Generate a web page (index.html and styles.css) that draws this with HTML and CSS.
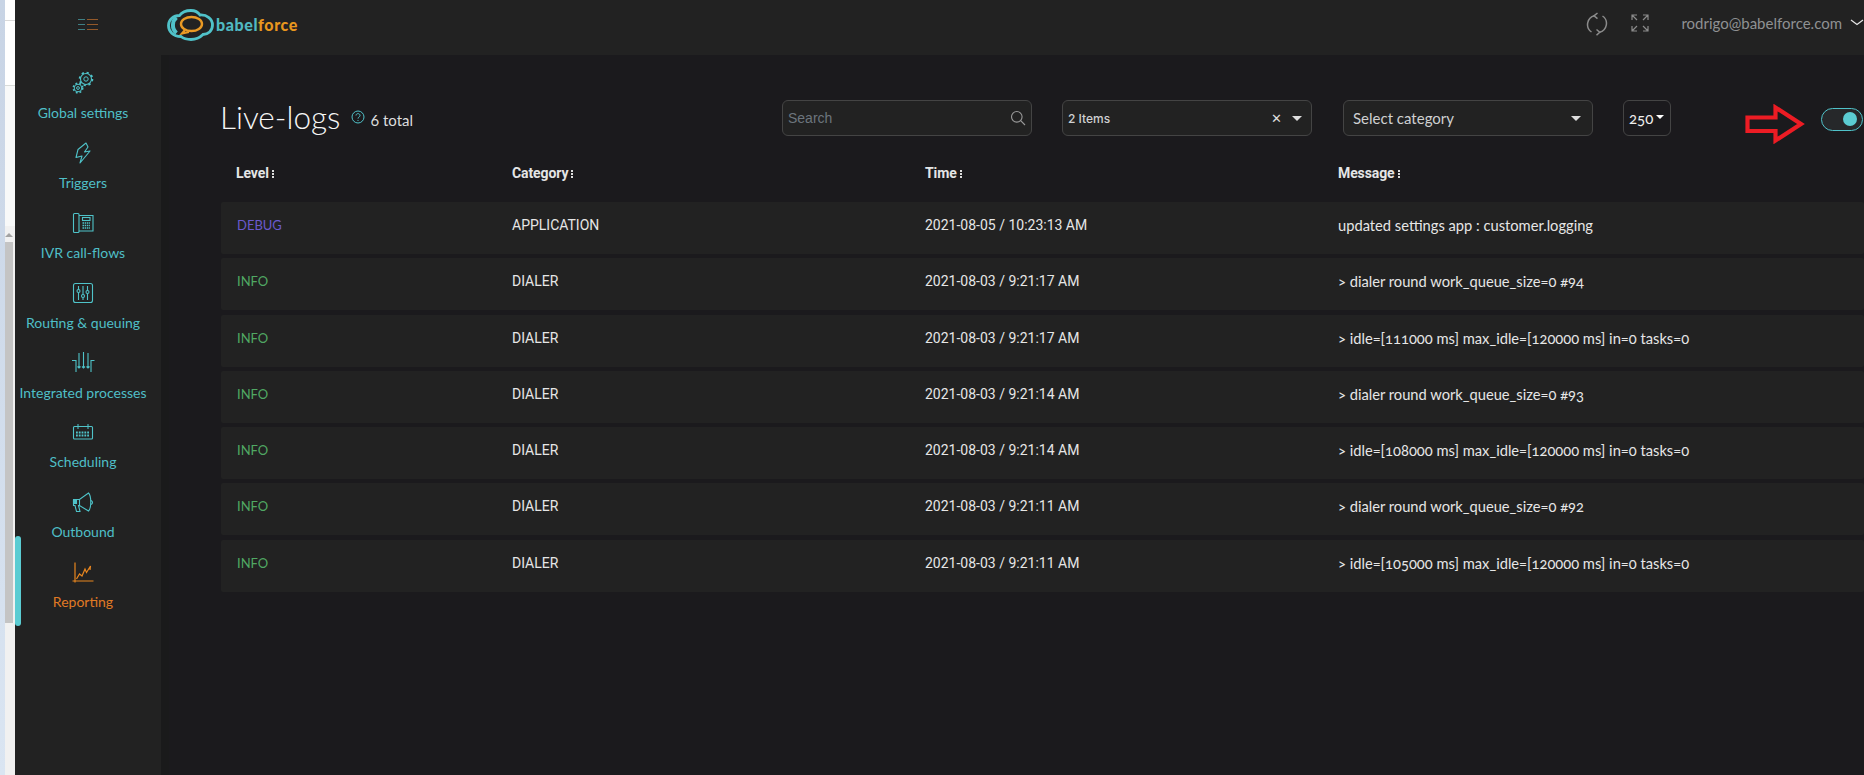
FILE: index.html
```html
<!DOCTYPE html>
<html lang="en">
<head>
<meta charset="utf-8">
<title>Live-logs</title>
<link rel="stylesheet" href="styles.css">
</head>
<body>
<div class="edge"></div>
<div class="gutter">
  <div class="g-a"></div>
  <div class="g-b"></div>
  <div class="g-c"></div>
  <div class="g-track">
    <div class="g-arrow"></div>
    <div class="g-thumb"></div>
  </div>
</div>
<div class="app">
  <header class="topbar">
    <div class="brand-slot">
      <svg class="menu-icon" width="22" height="14" viewBox="0 0 22 14"><g stroke-width="1"><path d="M1 1.5h7M1 6.5h7M1 11.5h7" stroke="#3f7f84"/><path d="M10 1.5h11M10 6.5h11M10 11.5h11" stroke="#94592a"/></g></svg>
    </div>
    <div class="logo">
      <svg width="47" height="32" viewBox="0 0 47 32" fill="none"><path d="M14 27.5C6 27.5 1.5 22.5 1.5 16.5 1.5 10.5 6.5 6.5 12.5 6.5 15 3 20 1.5 24 1.5c4 0 7 1.500 9 4.500C40 5.500 45.500 10 45.500 16c0 6-4.500 9.500-9.500 9.500-3 3-7.500 5-12 5-4 0-7.500-1-10-3z" stroke="#50c2c9" stroke-width="2.800"/><path d="M9.500 8.500C5 12 4.500 20 9.500 24" stroke="#50c2c9" stroke-width="4"/><ellipse cx="24.500" cy="15" rx="10.500" ry="7" stroke="#ea9a24" stroke-width="2.400"/><path d="M18 21l-3 3.500 7-1.500" stroke="#ea9a24" stroke-width="2.200"/></svg>
      <span class="logo-text"><span class="logo-a">babel</span><span class="logo-b">force</span></span>
    </div>
    <div class="top-actions">
      <svg class="sync" width="22" height="24" viewBox="0 0 22 24" fill="none" stroke="#8b8b8b" stroke-width="1.500"><path d="M8.500 3.800A9 9 0 0 0 5.500 20M13.500 20.200A9 9 0 0 0 16.500 4"/><path d="M11.500 1L8 3.800l3.500 2.800M10.500 17.500l3.200 2.700-3.200 3"/></svg>
      <svg class="expand" width="18" height="18" viewBox="0 0 18 18" fill="none" stroke="#8b8b8b" stroke-width="1.200"><path d="M1 6V1h5M1 1l5 5M12 1h5v5M17 1l-5 5M1 12v5h5M1 17l5-5M17 12v5h-5M17 17l-5-5"/></svg>
      <span class="user">rodrigo@babelforce.com</span>
      <svg class="chev" width="14" height="8" viewBox="0 0 14 8" fill="none" stroke="#e6e6e6" stroke-width="1.200"><path d="M1 1l6 4.500L13 1"/></svg>
    </div>
  </header>
  <div class="body">
    <nav class="side">
      <div class="active-bar"></div>
      <a class="nav-item">
        <svg class="nav-icon" viewBox="0 0 30 30" fill="none"><circle cx="18" cy="11" r="5.500" stroke-width="1.100"/><circle cx="18" cy="11" r="6.400" stroke-width="1.800" stroke-dasharray="2.200 2.800"/><circle cx="18" cy="11" r="2.200" stroke-width="1"/><circle cx="10" cy="20" r="3.800" stroke-width="1"/><circle cx="10" cy="20" r="4.700" stroke-width="1.600" stroke-dasharray="1.800 2"/><circle cx="10" cy="20" r="1.400" stroke-width="1"/></svg>
        <span>Global settings</span>
      </a>
      <a class="nav-item">
        <svg class="nav-icon" viewBox="0 0 30 30" fill="none" stroke-width="1.100"><path d="M18 5l-8 6.500-2 8 6-1.500-2 7 10-12-5.500 1 3.500-5z" stroke-linejoin="round"/></svg>
        <span>Triggers</span>
      </a>
      <a class="nav-item">
        <svg class="nav-icon" viewBox="0 0 30 30" fill="none" stroke-width="1.100"><rect x="5.500" y="5.500" width="5.500" height="19" rx="1"/><path d="M11 7.500h14v15.500H11"/><rect x="14.500" y="9.500" width="7.500" height="3"/><path d="M14.500 15h7.500M14.500 17.500h7.500M14.500 20h7.500" stroke-width="1.600" stroke-dasharray="1.500 .7"/></svg>
        <span>IVR call-flows</span>
      </a>
      <a class="nav-item">
        <svg class="nav-icon" viewBox="0 0 30 30" fill="none" stroke-width="1.100"><rect x="5.500" y="5.500" width="19" height="19" rx="2"/><path d="M10.500 8v14M15 8v14M19.500 8v14"/><circle cx="10.500" cy="13" r="1.500" fill="#222"/><circle cx="15" cy="18" r="1.500" fill="#222"/><circle cx="19.500" cy="14" r="1.500" fill="#222"/></svg>
        <span>Routing &amp; queuing</span>
      </a>
      <a class="nav-item nav-tight">
        <svg class="nav-icon" viewBox="0 0 30 30" fill="none" stroke-width="1.100"><path d="M11 5v15M15.500 4v16M20 5v15M9.500 18.500L11 20l1.500-1.500M14 18.500l1.500 1.500 1.500-1.500M18.500 18.500L20 20l1.500-1.500M4 12.500h4V24M26.500 12.500h-3.500V24"/></svg>
        <span>Integrated processes</span>
      </a>
      <a class="nav-item">
        <svg class="nav-icon" viewBox="0 0 30 30" fill="none" stroke-width="1.100"><rect x="5.500" y="9.500" width="19" height="12.500" rx="1"/><path d="M10 7v5M20 7v5" stroke-width="1"/><path d="M8 15.500h14M8 18.500h14" stroke-width="1.800" stroke-dasharray="1.800 1"/></svg>
        <span>Scheduling</span>
      </a>
      <a class="nav-item">
        <svg class="nav-icon" viewBox="0 0 30 30" fill="none" stroke-width="1.100"><path d="M5.500 12.500h6l9-6.500c3 3 3 15 0 18l-9-5.500h-1l1.500 6H8.500l-1.500-6h-1.500z"/><path d="M11.500 12.500v6M23 13.500c2 1 2 3 0 4"/><rect x="5.500" y="13.500" width="3" height="3" fill="#50c2c9"/></svg>
        <span>Outbound</span>
      </a>
      <a class="nav-item nav-on">
        <svg class="nav-icon" viewBox="0 0 30 30" fill="none" stroke-width="1.200"><path d="M7 5.500v20M4.500 24h21"/><path d="M8.500 22l3-5 2.500 2 3-7 1.500 3.500 4-6.500-.5 4"/></svg>
        <span>Reporting</span>
      </a>
    </nav>
    <main class="main">
      <div class="toolbar">
        <div class="heading">
          <h1 class="title">Live-logs</h1>
          <svg class="help" width="14" height="14" viewBox="0 0 14 14" fill="none" stroke="#50c2c9"><circle cx="7" cy="7" r="6"/><path d="M5 5.500C5 3 9 3 9 5.500 9 7 7 7 7 8.600M7 10v1"/></svg>
          <span class="total">6 total</span>
        </div>
        <div class="control search">
          <span class="placeholder">Search</span>
          <svg width="16" height="16" viewBox="0 0 16 16" fill="none" stroke="#9a9a9a" stroke-width="1.100"><circle cx="6.800" cy="6.800" r="5.300"/><path d="M10.700 10.700L15 15"/></svg>
        </div>
        <div class="control select-items">
          <span class="items-label">2 Items</span>
          <span class="clear">✕</span>
          <span class="caret"></span>
        </div>
        <div class="control select-cat">
          <span class="cat-label">Select category</span>
          <span class="caret"></span>
        </div>
        <div class="control page-size">
          <span class="size-label">250</span>
          <span class="caret small"></span>
        </div>
        <svg class="pointer" width="60" height="40" viewBox="0 0 60 40" fill="none"><path d="M2.500 13.500h28V3.500l25.500 16.500-25.500 16.500V27H2.500z" stroke="#ed1c24" stroke-width="4.200"/></svg>
        <div class="toggle"><span class="knob"></span></div>
      </div>
      <div class="log-grid log-head">
        <div class="th">Level<span class="sort"></span></div>
        <div class="th">Category<span class="sort"></span></div>
        <div class="th">Time<span class="sort"></span></div>
        <div class="th">Message<span class="sort"></span></div>
      </div>
      <div class="rows">
        <div class="log-grid log-row"><div class="lvl debug">DEBUG</div><div class="mono">APPLICATION</div><div class="mono">2021-08-05 / 10:23:13 AM</div><div class="msg">updated settings app : customer.logging</div></div>
        <div class="log-grid log-row"><div class="lvl info">INFO</div><div class="mono">DIALER</div><div class="mono">2021-08-03 / 9:21:17 AM</div><div class="msg">&gt; dialer round work_queue_size=0 #94</div></div>
        <div class="log-grid log-row"><div class="lvl info">INFO</div><div class="mono">DIALER</div><div class="mono">2021-08-03 / 9:21:17 AM</div><div class="msg">&gt; idle=[111000 ms] max_idle=[120000 ms] in=0 tasks=0</div></div>
        <div class="log-grid log-row"><div class="lvl info">INFO</div><div class="mono">DIALER</div><div class="mono">2021-08-03 / 9:21:14 AM</div><div class="msg">&gt; dialer round work_queue_size=0 #93</div></div>
        <div class="log-grid log-row"><div class="lvl info">INFO</div><div class="mono">DIALER</div><div class="mono">2021-08-03 / 9:21:14 AM</div><div class="msg">&gt; idle=[108000 ms] max_idle=[120000 ms] in=0 tasks=0</div></div>
        <div class="log-grid log-row"><div class="lvl info">INFO</div><div class="mono">DIALER</div><div class="mono">2021-08-03 / 9:21:11 AM</div><div class="msg">&gt; dialer round work_queue_size=0 #92</div></div>
        <div class="log-grid log-row"><div class="lvl info">INFO</div><div class="mono">DIALER</div><div class="mono">2021-08-03 / 9:21:11 AM</div><div class="msg">&gt; idle=[105000 ms] max_idle=[120000 ms] in=0 tasks=0</div></div>
      </div>
    </main>
  </div>
</div>
</body>
</html>
```
FILE: styles.css
```css
* { box-sizing: border-box; }
html, body { height: 100%; }
body {
  margin: 0;
  display: flex;
  overflow: hidden;
  background: #1b1a1d;
  font-family: "Lato", "Open Sans", sans-serif;
  color: #eee;
}
.edge { width: 5px; flex: none; background: linear-gradient(#c8d4e5, #dae5f2); }
.gutter { width: 10px; flex: none; display: flex; flex-direction: column; background: #fff; }
.g-a { height: 21px; border-bottom: 1px solid #d9d9d9; }
.g-b { height: 65px; border-bottom: 1px solid #d9dbd9; }
.g-c { height: 140px; background: #f8f9f9; }
.g-track { flex: 1; background: #f1f1f1; padding-top: 7px; }
.g-arrow { width: 0; height: 0; margin: 0 0 5px 0; border-left: 4px solid transparent; border-right: 4px solid transparent; border-bottom: 4px solid #a3a3a3; }
.g-thumb { width: 8px; height: 381px; background: #c4c4c4; }
.app { flex: 1; min-width: 0; display: flex; flex-direction: column; }
.topbar { height: 55px; flex: none; background: #222; display: flex; align-items: center; }
.brand-slot { width: 152px; flex: none; padding-left: 62px; display: flex; align-items: center; }
.menu-icon { display: block; margin-top: -6px; }
.logo { display: flex; align-items: center; gap: 2px; margin-top: -6px; }
.logo-text { font-size: 16px; font-weight: 900; letter-spacing: .6px; line-height: 20px; }
.logo-a { color: #50b9c2; }
.logo-b { color: #e8961e; }
.top-actions { margin-left: auto; display: flex; align-items: center; margin-top: -9px; }
.sync { margin-right: 23px; margin-top: 1px; }
.expand { margin-right: 32px; }
.user { font-size: 15px; color: #8f9193; margin-right: 8px; }
.chev { margin-right: 0; }
.body { flex: 1; min-height: 0; display: flex; }
.side {
  position: relative;
  width: 146px;
  flex: none;
  background: #222;
  padding: 11px 10px 0 0;
  display: flex;
  flex-direction: column;
  box-shadow: 8px 0 0 #1a1a1b;
}
.active-bar { position: absolute; left: 0; top: 481px; width: 6px; height: 90px; border-radius: 3px; background: #5bccd2; }
.nav-item { height: 70px; display: flex; flex-direction: column; align-items: center; color: #4fbfc7; font-size: 14px; line-height: 18px; white-space: nowrap; }
.nav-tight { height: 69px; }
.nav-icon { width: 30px; height: 30px; flex: none; stroke: #4fc3c9; margin: 2px 0 6px; }
.nav-on { color: #e07a24; }
.nav-on .nav-icon { stroke: #e8861f; }
.main { flex: 1; min-width: 0; padding: 45px 0 0 60px; }
.toolbar { display: flex; align-items: center; height: 36px; position: relative; }
.heading { display: flex; align-items: center; width: 561px; flex: none; }
.title { margin: -3px 0 0 -1px; font-size: 31.5px; font-weight: 300; line-height: 36px; color: #f6f6f6; }
.help { margin-left: 11px; margin-top: -2px; }
.total { margin-left: 5px; font-size: 15px; margin-top: 3px; color: #ddd; }
.control { height: 36px; flex: none; background: #222; border: 1px solid #444; border-radius: 6px; display: flex; align-items: center; }
.search { width: 250px; padding: 0 5px; justify-content: space-between; margin-right: 30px; }
.placeholder { font-size: 14px; color: #6c757d; font-family: "Liberation Sans", sans-serif; }
.select-items { width: 250px; padding: 0 9px 0 5px; margin-right: 31px; }
.items-label { font-size: 12px; font-weight: 500; color: #cfd0d1; font-family: "Inter", sans-serif; flex: 1; }
.clear { font-size: 13px; color: #ddd; margin-right: 10px; }
.caret { width: 0; height: 0; border-left: 5px solid transparent; border-right: 5px solid transparent; border-top: 5px solid #ddd; }
.caret.small { border-left-width: 4px; border-right-width: 4px; border-top-width: 4px; border-top-color: #fff; margin-left: 3px; margin-top: -2px; }
.select-cat { width: 250px; padding: 0 11px 0 9px; margin-right: 30px; }
.cat-label { font-size: 15px; color: #cfd0d1; flex: 1; }
.page-size { width: 48px; padding-left: 5px; background: transparent; }
.size-label { font-size: 15px; color: #eee; font-feature-settings: "onum"; }
.pointer { margin-left: 74px; flex: none; margin-top: 12px; }
.toggle { margin-left: 16px; width: 42px; height: 23px; border: 1px solid #50c2c9; border-radius: 12px; display: flex; align-items: center; justify-content: flex-end; padding-right: 5px; flex: none; background: #26282a; margin-top: 2px; }
.knob { width: 14px; height: 14px; border-radius: 50%; background: #5bccd2; }
.log-grid { display: grid; grid-template-columns: 276px 413px 413px 1fr; padding-left: 15px; }
.log-head { height: 58px; padding-top: 15px; align-items: center; margin-bottom: 8px; }
.th { font-family: "Roboto", sans-serif; font-size: 14px; font-weight: 700; color: #e4e5e6; display: flex; align-items: center; letter-spacing: -.1px; }
.sort { display: inline-block; width: 2px; height: 8px; margin-left: 3px; margin-top: 2px; background: repeating-linear-gradient(#ddd 0 2px, transparent 2px 3px); }
.rows { display: flex; flex-direction: column; gap: 4.25px; }
.log-row { height: 52px; background: #222; border-radius: 2px; padding-top: 13px; font-size: 14px; line-height: 20px; }
.lvl { font-size: 13px; margin-left: 1px; }
.debug { color: #6a5acd; }
.info { color: #50a863; }
.mono { font-family: "Roboto", sans-serif; font-weight: 400; color: #e6e6e6; }
.msg { color: #e6e6e6; font-size: 14.7px; font-feature-settings: "onum"; }
```
